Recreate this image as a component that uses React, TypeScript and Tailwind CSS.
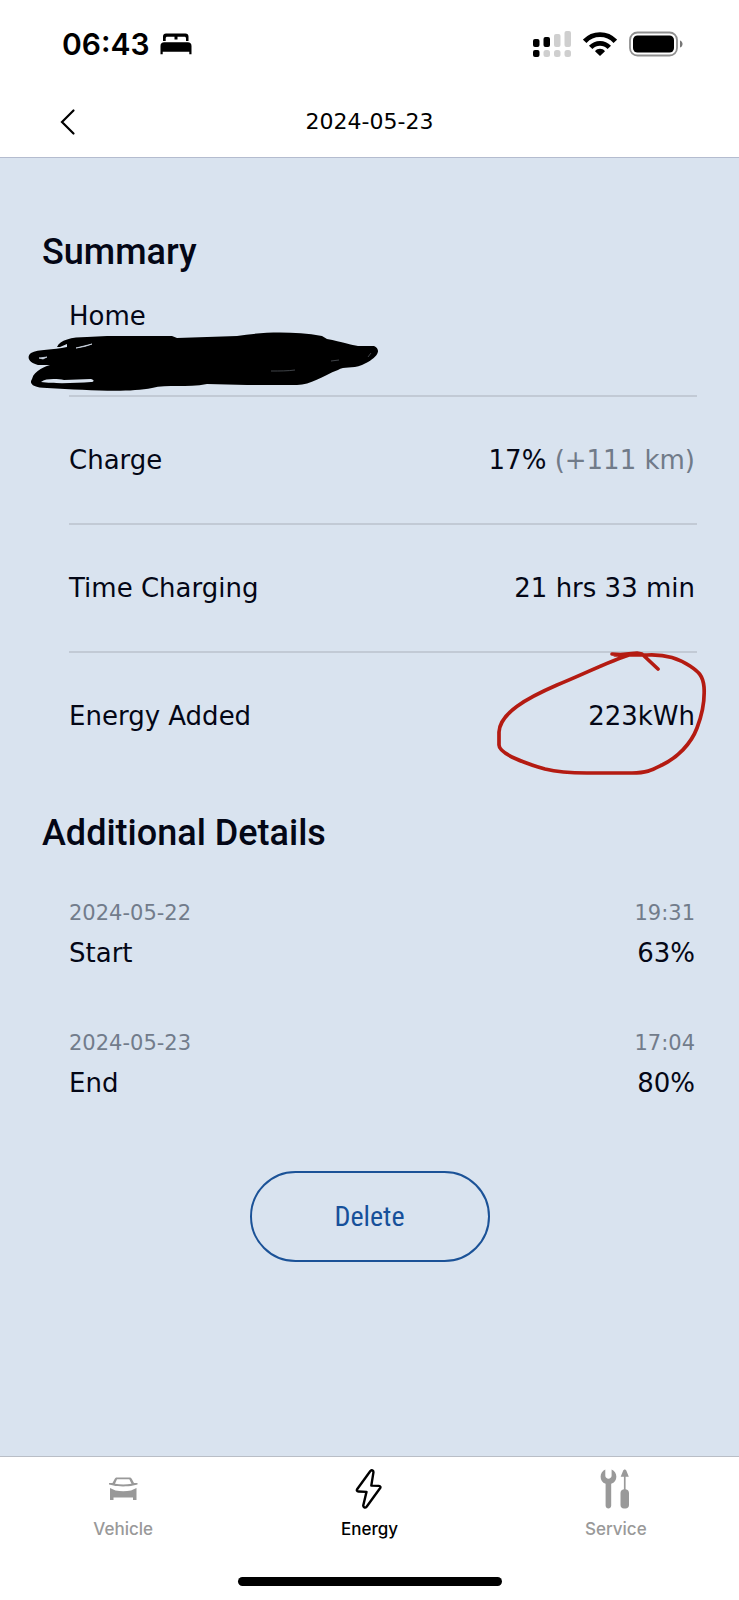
import type { ReactNode } from 'react';

const details = [
  { date: '2024-05-22', time: '19:31', label: 'Start', level: '63%' },
  { date: '2024-05-23', time: '17:04', label: 'End', level: '80%' },
];

function StatusBar() {
  return (
    <div className="flex h-22 items-center justify-between pr-14 pl-[62px]">
      <div className="flex items-center gap-2.5">
        <span className="font-[Inter] text-[30px] leading-9 font-semibold">06:43</span>
        <svg className="h-[22px] w-8" viewBox="0 0 32 22" fill="currentColor" aria-hidden="true">
          <path d="M3 8V3.500C3 1.400 4.200.5 6 .5h19.500c1.800 0 3 .9 3 3V8H26V5.500c0-1.200-.6-1.800-1.600-1.800H17.500V6.500h-3V3.700H7.300c-1 0-1.600.6-1.600 1.800V8z" />
          <path d="M.5 21.300V13c0-2.500 1.400-3.700 3.700-3.700h23.600c2.300 0 3.700 1.200 3.700 3.700v8.300h-2.200v-2.600H2.700v2.600z" />
        </svg>
      </div>
      <div className="flex items-center gap-3">
        <svg className="h-[26px] w-[38px]" viewBox="0 0 38 26" aria-hidden="true">
          <rect x="0" y="8" width="6.500" height="8" rx="2" />
          <rect x="10.500" y="6" width="6.500" height="10" rx="2" />
          <rect x="21" y="3" width="6.500" height="13" rx="2" fill="#cfcfcf" />
          <rect x="31.500" y="0" width="6.500" height="16" rx="2" fill="#cfcfcf" />
          <rect x="0" y="19" width="6.500" height="7" rx="2" />
          <rect x="10.500" y="19" width="6.500" height="7" rx="2.500" fill="#cfcfcf" />
          <rect x="21" y="19" width="6.500" height="7" rx="2.500" fill="#cfcfcf" />
          <rect x="31.500" y="19" width="6.500" height="7" rx="2.500" fill="#cfcfcf" />
        </svg>
        <svg className="h-6 w-[34px]" viewBox="0 0 34 24" fill="none" stroke="currentColor" strokeWidth="4.800" aria-hidden="true">
          <path d="M1.700 9.300C10 .4 24 .4 32.300 9.300" />
          <path d="M7.700 15.400C13 10 21 10 26.300 15.400" />
          <path d="M17 24l-5-4.800c2.700-3.200 7.300-3.200 10 0z" fill="currentColor" stroke="none" />
        </svg>
        <svg className="h-[26px] w-[54px]" viewBox="0 0 54 26" aria-hidden="true">
          <rect x="1" y="1.500" width="47" height="23" rx="7.500" fill="none" stroke="#8f8f8f" strokeWidth="1.800" />
          <rect x="4" y="4.500" width="41" height="17" rx="4.500" />
          <path d="M51 9.500c3.400 1 3.400 6 0 7z" fill="#777" />
        </svg>
      </div>
    </div>
  );
}

function Row({ label, children }: { label: string; children: ReactNode }) {
  return (
    <div className="flex h-32 items-center justify-between border-t-2 border-[#c2cad5] pr-0.5">
      <dt>{label}</dt>
      <dd>{children}</dd>
    </div>
  );
}

function Scribble() {
  return (
    <svg className="absolute top-8 -left-[42px] h-[62px] w-[354px]" viewBox="0 0 354 62" aria-hidden="true">
      <path d="M30 15C33 8 44 5 60 5L80 4H145L150 6 210 4C235 0 265-1 295 4L300 7C315 10 325 13 331 14L347 14C355 18 350 25 341 30L335 33C325 37 317 34 311 38 295 44 284 53 270 53L220 53 180 52C160 56 140 52 125 56 100 61 60 58 20 56 5 56 2 51 5 47 7 38 20 34 23 33L11 33C2 31-1 25 4 21 11 17 26 18 40 15L40 12 33 15Z" />
      <path d="M14 50c5-4 17-3 23-2l27-1c4 1 3 3 0 3-15 1-35 2-50 0z" fill="#d9e3ef" />
      <path d="M49 16l16-4c-5 2-9 3-16 4zM12 26l8-1-4 2z" fill="#d9e3ef" stroke="#d9e3ef" strokeWidth=".7" />
      <path d="M244 39c9 0 17 0 24-1M304 29l8-1M344 21l-3 4" fill="none" stroke="#5b6169" strokeWidth=".7" />
    </svg>
  );
}

function VehicleIcon() {
  return (
    <svg className="size-10" viewBox="0 0 40 40" fill="currentColor" aria-hidden="true">
      <path d="M6 14h3.500l2.300-4.200c.5-.9 1.200-1.300 2.200-1.300h12.500c1 0 1.700.4 2.200 1.300l2.300 4.200H34.500v1.500l-4.500 1C25 17.700 15 17.700 10.500 16.500l-4.500-1zM12 14.800c5 1 11.500 1 16.500 0l-2.200-4.500H14z" fillRule="evenodd" />
      <path d="M7 19l5.500 2.500c5 1 10.500 1 15.500 0l5.500-2.500v12H30v-2.500H10.500V31H7z" />
    </svg>
  );
}

function EnergyIcon() {
  return (
    <svg className="size-10" viewBox="0 0 40 40" fill="none" stroke="currentColor" strokeWidth="2.400" strokeLinejoin="round" aria-hidden="true">
      <path d="M21.200 2.200L8.300 20c-.9 1.400-.4 2.400 1.200 2.500l8 .4-3.200 13.300c-.4 2.200 1.900 3.200 3.300 1.500L31 19.300c.9-1.300.4-2.300-1.100-2.400l-7.600-.3L24.400 3.600c.3-2.300-1.900-3.200-3.200-1.400z" />
    </svg>
  );
}

function ServiceIcon() {
  return (
    <svg className="size-10" viewBox="0 0 40 40" fill="currentColor" aria-hidden="true">
      <path d="M9.300.5C3 3.200 3 12.500 9.600 14.800V36.500c0 4 5.600 4 5.600 0V14.800C22 12.500 22 3.200 15.600.5V6.500c0 4.200-6.300 4.200-6.300 0z" />
      <path d="M27.900 20.200V7.800H24.700L27 2c.8-2 2.700-2 3.500 0l2.300 5.800h-3.200v12.400c2.300.4 3.400 1.700 3.400 3.800v12c0 2.300-1.400 3.500-3.400 3.500h-1.700c-2 0-3.400-1.200-3.400-3.500V24c0-2.100 1.100-3.400 3.400-3.800z" />
    </svg>
  );
}

function Tab({ label, active, children }: { label: string; active?: boolean; children: ReactNode }) {
  return (
    <a
      href="#"
      aria-current={active ? 'page' : undefined}
      className={`flex flex-1 flex-col items-center gap-2 pt-3 ${active ? 'text-black' : 'text-[#999]'}`}
    >
      {children}
      <span className="font-[Inter] text-[17px] leading-6 font-medium">{label}</span>
    </a>
  );
}

export default function App() {
  return (
    <div className="flex min-h-screen flex-col bg-white font-['DejaVu_Sans',sans-serif] text-black">
      <header className="border-b border-[#b4bccf]">
        <StatusBar />
        <div className="grid h-[69px] grid-cols-3 items-center px-14 pb-0.5">
          <button aria-label="Back" className="justify-self-start p-1">
            <svg className="h-7 w-4" viewBox="0 0 16 28" fill="none" stroke="currentColor" strokeWidth="2.200" strokeLinecap="round" aria-hidden="true">
              <path d="M13.500 2.500L2 14l11.500 11.500" />
            </svg>
          </button>
          <h1 className="text-center text-[22px] leading-8">2024-05-23</h1>
        </div>
      </header>

      <main className="flex-1 bg-[#d9e3ef] px-[42px] pt-[70px] text-[26px] leading-8 text-[#040716]">
        <h2 className="font-[Roboto] text-[36px] leading-12 font-medium">Summary</h2>
        <section className="pl-[27px]">
          <div className="relative mt-6 h-[95px]">
            <p>Home</p>
            <Scribble />
          </div>
          <dl>
            <Row label="Charge">
              17% <span className="text-[#717b89]">(+111 km)</span>
            </Row>
            <Row label="Time Charging">21 hrs 33 min</Row>
            <div className="relative">
              <Row label="Energy Added">223kWh</Row>
              <svg className="absolute top-0 -right-2.5 h-[124px] w-[210px]" viewBox="0 0 210 124" fill="none" stroke="#b41b12" strokeWidth="3.700" strokeLinecap="round" strokeLinejoin="round" aria-hidden="true">
                <path d="M115 3L132 4C115 9 85 24 60 34 30 47 3 62 2 81V94C2 103 30 113 48 118 60 121 75 122 90 122H135C150 122 155 119 165 114 180 107 194 93 200 77 205 64 208 50 207 36 206 25 202 21 193 15 182 8 170 3 150 4L118 4 140 2 145 3 161 18" />
              </svg>
            </div>
          </dl>
        </section>

        <h2 className="mt-[30px] font-[Roboto] text-[36px] leading-12 font-medium">Additional Details</h2>
        <section className="mt-10 space-y-[54px] pr-0.5 pl-[27px]">
          {details.map((item) => (
            <div key={item.label}>
              <div className="flex justify-between text-[21px] leading-8 text-[#727c8b]">
                <span>{item.date}</span>
                <span>{item.time}</span>
              </div>
              <div className="mt-1 flex justify-between leading-10">
                <span>{item.label}</span>
                <span>{item.level}</span>
              </div>
            </div>
          ))}
        </section>

        <button className="mx-auto mt-[68px] block h-[91px] w-60 rounded-full border-2 border-[#1b5297] font-['Liberation_Sans_Narrow','Roboto_Condensed',Roboto] text-[28px] text-[#16509a]">
          Delete
        </button>
      </main>

      <nav className="border-t border-[#b9bec6] bg-white">
        <div className="flex">
          <Tab label="Vehicle">
            <VehicleIcon />
          </Tab>
          <Tab label="Energy" active>
            <EnergyIcon />
          </Tab>
          <Tab label="Service">
            <ServiceIcon />
          </Tab>
        </div>
        <div className="mx-auto mt-9 mb-3.5 h-[9px] w-[264px] rounded-full bg-black" />
      </nav>
    </div>
  );
}
